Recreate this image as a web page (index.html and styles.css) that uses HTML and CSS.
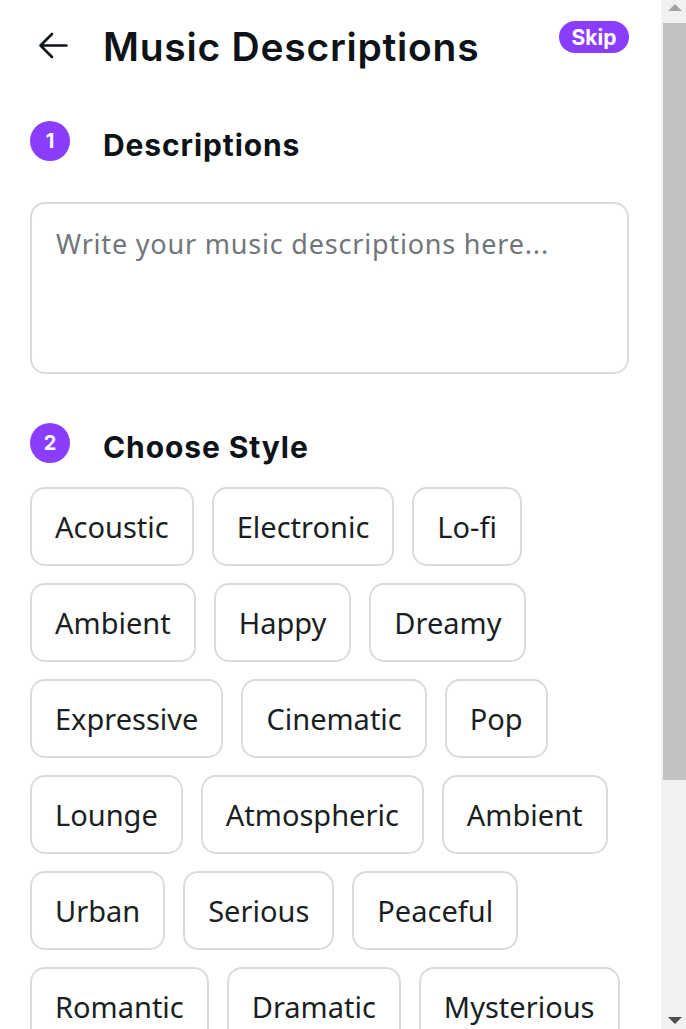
FILE: index.html
```html
<!DOCTYPE html>
<html lang="en">
<head>
<meta charset="utf-8">
<title>Music Descriptions</title>
<link rel="stylesheet" href="styles.css">
</head>
<body>
<div class="app">
  <main class="main">
    <header class="header">
      <div class="header-left">
        <button class="back" aria-label="Back">
          <svg width="30" height="27" viewBox="0 0 30 27" fill="none" stroke="#0e1318" stroke-width="2.6" stroke-linecap="round" stroke-linejoin="round">
            <path d="M28.5 13.5H2.5M14 2L2.5 13.5L14 25"/>
          </svg>
        </button>
        <h1 class="title">Music Descriptions</h1>
      </div>
      <span class="skip">Skip</span>
    </header>

    <section class="step step-one">
      <div class="step-head">
        <span class="step-num">1</span>
        <h2 class="step-title">Descriptions</h2>
      </div>
      <div class="textarea">
        <span class="placeholder">Write your music descriptions here...</span>
      </div>
    </section>

    <section class="step step-two">
      <div class="step-head">
        <span class="step-num">2</span>
        <h2 class="step-title">Choose Style</h2>
      </div>
      <div class="chips">
        <span class="chip">Acoustic</span>
        <span class="chip">Electronic</span>
        <span class="chip">Lo-fi</span>
        <span class="chip">Ambient</span>
        <span class="chip">Happy</span>
        <span class="chip">Dreamy</span>
        <span class="chip">Expressive</span>
        <span class="chip">Cinematic</span>
        <span class="chip">Pop</span>
        <span class="chip">Lounge</span>
        <span class="chip">Atmospheric</span>
        <span class="chip">Ambient</span>
        <span class="chip">Urban</span>
        <span class="chip">Serious</span>
        <span class="chip">Peaceful</span>
        <span class="chip">Romantic</span>
        <span class="chip">Dramatic</span>
        <span class="chip">Mysterious</span>
      </div>
    </section>
  </main>
  <div class="scrollbar" aria-hidden="true">
    <div class="sb-btn"><span class="tri-up"></span></div>
    <div class="sb-track"><div class="sb-thumb"></div></div>
    <div class="sb-btn sb-btn-down"><span class="tri-down"></span></div>
  </div>
</div>
</body>
</html>
```

FILE: styles.css
```css
* { box-sizing: border-box; }

html, body {
  margin: 0;
  padding: 0;
  height: 100%;
  background: #ffffff;
}

body {
  font-family: "Inter", "Noto Sans", sans-serif;
  color: #0e1318;
}

.app {
  display: flex;
  height: 100vh;
  overflow: hidden;
}

.main {
  flex: 1;
  min-width: 0;
  height: 100vh;
  overflow: hidden;
  padding: 21px 32px 0 30px;
}

/* Header */
.header {
  display: flex;
  justify-content: space-between;
  align-items: flex-start;
}

.header-left {
  display: flex;
  align-items: center;
  height: 52px;
}

.back {
  display: flex;
  align-items: center;
  justify-content: center;
  width: 30px;
  height: 27px;
  padding: 0;
  margin: -4px 35px 0 8px;
  border: none;
  background: none;
}

.title {
  margin: 0;
  font-family: "Inter", sans-serif;
  font-weight: 600;
  font-size: 39px;
  line-height: 52px;
  letter-spacing: 0.75px;
  color: #0e1318;
}

.skip {
  display: inline-flex;
  align-items: center;
  justify-content: center;
  width: 70px;
  height: 32px;
  border-radius: 16px;
  background: #8b3dff;
  color: #ffffff;
  font-family: "Inter", sans-serif;
  font-weight: 700;
  font-size: 21px;
}

/* Steps */
.step-one { margin-top: 48px; }
.step-two { margin-top: 49px; }

.step-head {
  display: flex;
  align-items: center;
  height: 40px;
}

.step-num {
  display: flex;
  align-items: center;
  justify-content: center;
  width: 40px;
  height: 40px;
  border-radius: 50%;
  background: #8b3dff;
  color: #ffffff;
  font-family: "Inter", sans-serif;
  font-weight: 700;
  font-size: 20px;
  flex-shrink: 0;
}

.step-title {
  margin: 8px 0 0 33px;
  font-family: "Inter", sans-serif;
  font-weight: 700;
  font-size: 30px;
  line-height: 40px;
  letter-spacing: 0.9px;
  color: #0e1318;
}

/* Textarea */
.textarea {
  margin-top: 41px;
  height: 172px;
  border: 2px solid #d8dbdf;
  border-radius: 15px;
  padding: 20px 24px;
}

.placeholder {
  font-family: "Noto Sans", sans-serif;
  font-size: 27px;
  line-height: 40px;
  letter-spacing: 0.8px;
  color: #72767b;
}

/* Chips */
.chips {
  margin-top: 24px;
  display: flex;
  flex-wrap: wrap;
  gap: 17px 18px;
}

.chip {
  display: inline-flex;
  align-items: center;
  height: 79px;
  padding: 0 23px 1px;
  border: 2px solid #d8dbdf;
  border-radius: 15px;
  font-family: "Noto Sans", sans-serif;
  font-size: 29px;
  color: #1b1f23;
  white-space: nowrap;
}

/* Scrollbar */
.scrollbar {
  width: 25px;
  flex-shrink: 0;
  height: 100vh;
  background: #f1f1f1;
  display: flex;
  flex-direction: column;
}

.sb-btn {
  height: 23px;
  display: flex;
  align-items: center;
  justify-content: center;
  padding-left: 2px;
}

.tri-up {
  width: 0;
  height: 0;
  border-left: 7px solid transparent;
  border-right: 7px solid transparent;
  border-bottom: 7px solid #a3a3a3;
  margin-top: -8px;
}

.tri-down {
  width: 0;
  height: 0;
  border-left: 7px solid transparent;
  border-right: 7px solid transparent;
  border-top: 7px solid #505050;
  margin-top: 6px;
}

.sb-track {
  flex: 1;
  padding-left: 2px;
}

.sb-thumb {
  height: 757px;
  background: #c1c1c1;
}
```
